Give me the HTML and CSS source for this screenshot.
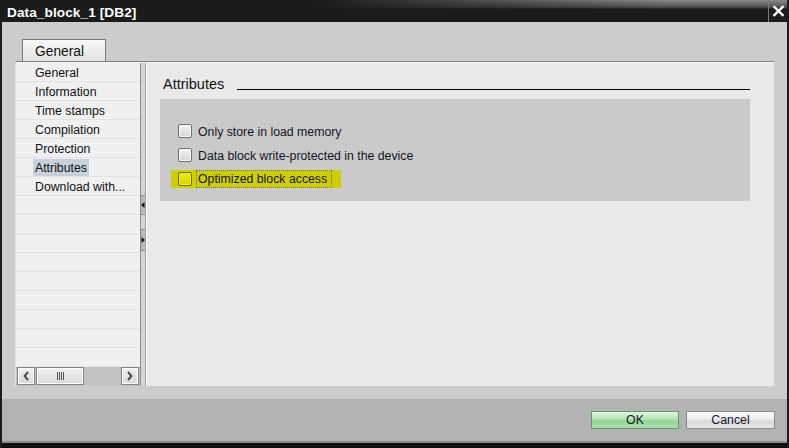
FILE: index.html
```html
<!DOCTYPE html>
<html lang="en">
<head>
<meta charset="utf-8">
<title>Data_block_1 [DB2]</title>
<link rel="stylesheet" href="styles.css">
</head>
<body>
<div class="window">
  <div class="titlebar">
    <span class="title">Data_block_1 [DB2]</span>
    <div class="close">
      <svg width="13" height="12" viewBox="0 0 13 12"><path d="M1.5 1.2 L11.5 10.8 M11.5 1.2 L1.5 10.8" stroke="#fff" stroke-width="2.3" fill="none"/></svg>
    </div>
  </div>
  <div class="body">
    <div class="tabs"><div class="tab">General</div></div>
    <div class="panel">
      <div class="nav">
        <ul class="nav-list">
          <li><span>General</span></li>
          <li><span>Information</span></li>
          <li><span>Time stamps</span></li>
          <li><span>Compilation</span></li>
          <li><span>Protection</span></li>
          <li><span class="sel">Attributes</span></li>
          <li><span>Download with...</span></li>
          <li></li><li></li><li></li><li></li><li></li><li></li><li></li><li></li><li></li>
        </ul>
        <div class="hscroll">
          <div class="sbtn"><svg width="6" height="10" viewBox="0 0 6 10"><path d="M5 1 L1.6 5 L5 9" stroke="#4a4a4a" stroke-width="2" fill="none"/></svg></div>
          <div class="thumb"><svg width="7" height="8" viewBox="0 0 7 8"><path d="M0.5 0 V8 M2.5 0 V8 M4.5 0 V8 M6.5 0 V8" stroke="#555" stroke-width="1" fill="none"/></svg></div>
          <div class="track"></div>
          <div class="sbtn"><svg width="6" height="10" viewBox="0 0 6 10"><path d="M1 1 L4.4 5 L1 9" stroke="#4a4a4a" stroke-width="2" fill="none"/></svg></div>
        </div>
      </div>
      <div class="splitter">
        <div class="split-btn"><svg width="4" height="6" viewBox="0 0 4 6"><path d="M3.5 0 L0 3 L3.5 6 Z" fill="#111"/></svg></div>
        <div class="split-btn tall"><svg width="4" height="6" viewBox="0 0 4 6"><path d="M0.5 0 L4 3 L0.5 6 Z" fill="#111"/></svg></div>
      </div>
      <div class="content">
        <div class="section-head">
          <span class="section-title">Attributes</span>
          <span class="rule"></span>
        </div>
        <div class="group">
          <div class="opt"><span class="cb"></span><span class="lbl">Only store in load memory</span></div>
          <div class="opt"><span class="cb"></span><span class="lbl">Data block write-protected in the device</span></div>
          <div class="opt"><span class="hl"><span class="cb cb-hl"></span><span class="lbl focus">Optimized block access</span></span></div>
        </div>
      </div>
    </div>
  </div>
  <div class="footer">
    <button class="btn ok">OK</button>
    <button class="btn cancel">Cancel</button>
  </div>
  <div class="bottom-strip"></div>
</div>
</body>
</html>
```
FILE: styles.css
```css
* { box-sizing: border-box; }
html, body { margin: 0; padding: 0; }
body {
  width: 789px;
  height: 448px;
  overflow: hidden;
  background: #111;
  font-family: "Liberation Sans", Arial, sans-serif;
  font-size: 12.3px;
  color: #141424;
}
.window {
  width: 789px;
  height: 448px;
  border-left: 2px solid #1b1b1b;
  border-right: 2px solid #1b1b1b;
  display: flex;
  flex-direction: column;
  background: #cccccc;
}
.titlebar {
  height: 22px;
  flex: none;
  display: flex;
  align-items: stretch;
  justify-content: space-between;
  background:
    linear-gradient(to right, #1b1b1b 40%, rgba(27,27,27,0) 85%) 0 0 / 100% 9px no-repeat,
    linear-gradient(#8a8a8a, #505050 7px, #1b1b1b 9px);
  padding-left: 5px;
}
.title {
  color: #fff;
  font-weight: bold;
  font-size: 13.6px;
  line-height: 25px;
  letter-spacing: 0.1px;
}
.close {
  width: 19px;
  border-left: 1px solid #7a7a7a;
  display: flex;
  align-items: center;
  justify-content: center;
}
.body {
  flex: 1;
  padding: 17px 13px 13px 13px;
  display: flex;
  flex-direction: column;
}
.tabs { display: flex; height: 22px; }
.tab {
  margin-left: 7px;
  width: 84px;
  height: 22px;
  border: 1px solid #7a7a7a;
  border-bottom: none;
  background: linear-gradient(#f8f8f8, #e4e4e4);
  padding-left: 12px;
  font-size: 13.8px;
  line-height: 23px;
  color: #111;
}
.panel {
  height: 325px;
  border-top: 1px solid #808080;
  border-left: 1px solid #e4e4e4;
  padding-top: 1px;
  background: #f4f4f4;
  display: flex;
}
.nav {
  width: 124px;
  display: flex;
  flex-direction: column;
  background: #f0f0f0;
}
.nav-list {
  list-style: none;
  margin: 0;
  padding: 0;
  flex: 1;
}
.nav-list li {
  height: 19px;
  border-bottom: 1px solid #e3e3e3;
  padding-left: 17px;
  display: flex;
  align-items: center;
}
.nav-list span {
  display: block;
  height: 17px;
  line-height: 19px;
  padding: 0 2px;
  color: #101010;
}
.nav-list .sel { background: #c7d1dc; }
.hscroll {
  height: 19px;
  background: #c3c3c3;
  display: flex;
  padding: 0 1px 1px 1px;
}
.sbtn, .thumb {
  height: 18px;
  border: 1px solid #858585;
  box-shadow: inset 0 0 0 1px #fff;
  background: linear-gradient(#f0f0f0, #d8d8d8);
  display: flex;
  align-items: center;
  justify-content: center;
}
.sbtn { width: 18px; }
.thumb { width: 48px; margin-left: 1px; }
.track { flex: 1; }
.splitter {
  width: 7px;
  background: linear-gradient(to right, #8c8c8c 0 1px, #d6d6d6 1px 5px, #9a9a9a 5px 6px, #ffffff 6px 7px);
  display: flex;
  flex-direction: column;
  padding-top: 132px;
  gap: 14px;
}
.split-btn {
  margin-left: 1px;
  width: 4px;
  height: 20px;
  background: linear-gradient(to right, #b0b0b0, #c4c4c4);
  border-top: 1px solid #8e8e8e;
  border-bottom: 1px solid #8e8e8e;
  display: flex;
  align-items: center;
  justify-content: center;
}
.split-btn.tall { height: 22px; }
.content {
  flex: 1;
  background: #e9e9e9;
  padding: 11px 24px 0 13px;
}
.section-head {
  height: 18px;
  display: flex;
  align-items: flex-end;
  padding-left: 3px;
}
.section-title {
  font-size: 14.5px;
  line-height: 18px;
  margin-bottom: -1px;
  color: #111;
}
.rule {
  flex: 1;
  border-bottom: 1px solid #000;
  margin: 0 0 2px 13px;
}
.group {
  margin-top: 7px;
  height: 102px;
  background: #cacaca;
  padding: 20px 0 0 18px;
}
.opt {
  height: 24px;
  display: flex;
  align-items: center;
}
.cb {
  width: 14px;
  height: 14px;
  border: 1px solid #6f6f6f;
  border-radius: 2px;
  box-shadow: inset 0 0 0 1px #fbfbfb;
  background: linear-gradient(#f4f4f4, #d6d6d6);
  margin-right: 6px;
  flex: none;
}
.lbl { white-space: nowrap; line-height: 15px; padding-top: 2px; }
.hl {
  display: flex;
  align-items: center;
  height: 18px;
  margin-left: -7px;
  padding: 0 9px 0 7px;
  background: #cece00;
}
.cb-hl {
  border-color: #6a6a00;
  box-shadow: inset 0 0 0 1px #f2f200;
  background: linear-gradient(#eded00, #d8d800);
  margin-right: 4px;
}
.focus {
  border: 1px dotted #6d6d80;
  padding: 1px 4px 0 1px;
}
.footer {
  height: 44px;
  flex: none;
  background: #b3b3b3;
  border-bottom: 2px solid #8b8b8b;
  display: flex;
  justify-content: flex-end;
  align-items: flex-start;
  gap: 7px;
  padding: 12px 12px 0 0;
}
.btn {
  height: 18px;
  margin: 0;
  padding: 0;
  font-family: "Liberation Sans", Arial, sans-serif;
  font-size: 12.3px;
  color: #14142a;
  line-height: 16px;
}
.ok {
  width: 88px;
  border: 1px solid #609a60;
  background: linear-gradient(#e2f5e2, #b4e3b4 45%, #92d592 55%, #aee0ae);
}
.cancel {
  width: 89px;
  border: 1px solid #8a8a8a;
  background: linear-gradient(#fcfcfc, #ededed 45%, #d9d9d9 55%, #e6e6e6);
}
.bottom-strip {
  height: 5px;
  flex: none;
  background: #111;
}
```
